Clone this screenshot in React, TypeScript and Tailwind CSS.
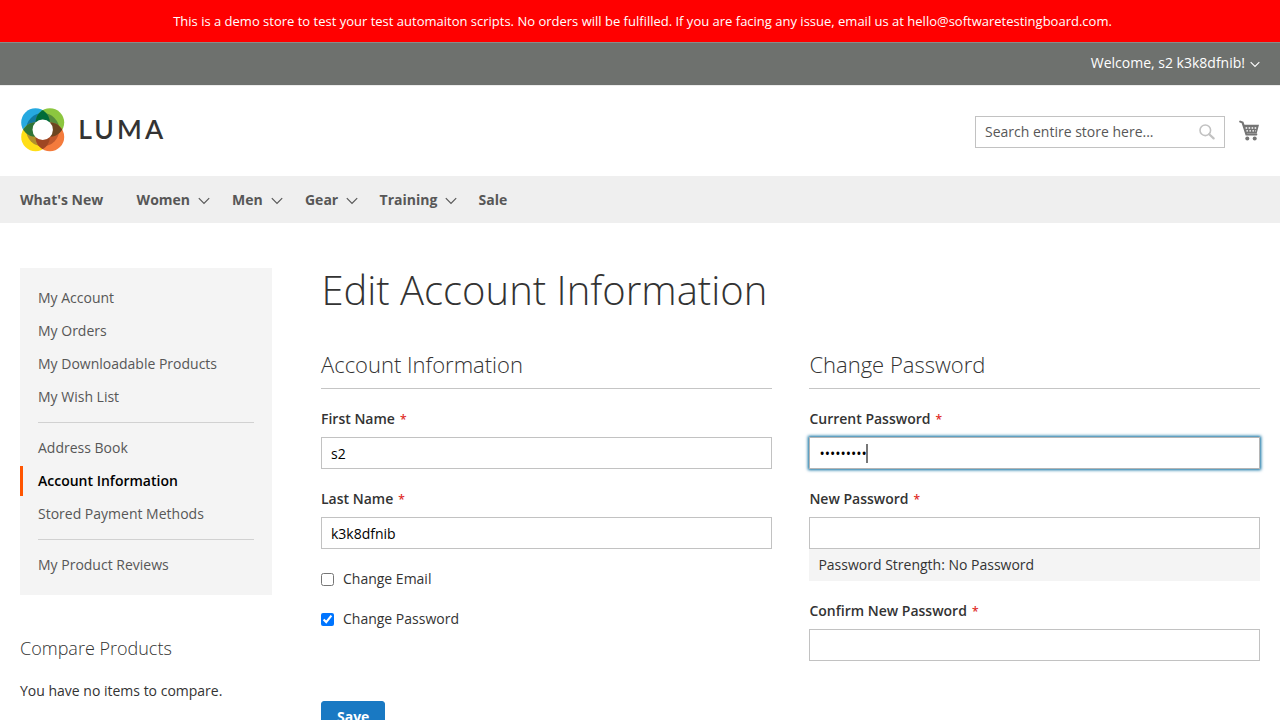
import type { ReactNode } from "react";

function Chevron({ className, strokeWidth = 1.2 }: { className: string; strokeWidth?: number }) {
  return (
    <svg viewBox="0 0 12 8" className={className} fill="none" stroke="currentColor" strokeWidth={strokeWidth}>
      <path d="M0.8 1.2 L6 6.4 L11.2 1.2" />
    </svg>
  );
}

function Logo() {
  return (
    <div className="flex items-center">
      <svg viewBox="0 0 44 44" className="h-11 w-11">
        <defs>
          <clipPath id="tl"><circle cx="14.5" cy="14.5" r="14.3" /></clipPath>
          <clipPath id="tr"><circle cx="28.9" cy="14.5" r="14.3" /></clipPath>
          <clipPath id="bl"><circle cx="14.5" cy="28.9" r="14.3" /></clipPath>
          <clipPath id="br"><circle cx="28.9" cy="28.9" r="14.3" /></clipPath>
        </defs>
        <circle cx="14.5" cy="14.5" r="14.3" fill="#26a9e0" />
        <circle cx="28.9" cy="14.5" r="14.3" fill="#8cc63f" />
        <circle cx="14.5" cy="28.9" r="14.3" fill="#ffde17" />
        <circle cx="28.9" cy="28.9" r="14.3" fill="#f47b3c" />
        <g clipPath="url(#tl)"><circle cx="21.7" cy="21.7" r="16.6" fill="#12799f" /></g>
        <g clipPath="url(#tr)"><circle cx="21.7" cy="21.7" r="16.6" fill="#568a3c" /></g>
        <g clipPath="url(#bl)"><circle cx="21.7" cy="21.7" r="16.6" fill="#b0902c" /></g>
        <g clipPath="url(#br)"><circle cx="21.7" cy="21.7" r="16.6" fill="#c0582b" /></g>
        <g clipPath="url(#tl)">
          <circle cx="28.9" cy="14.5" r="14.3" fill="#006b38" />
          <circle cx="14.5" cy="28.9" r="14.3" fill="#2f7436" />
        </g>
        <g clipPath="url(#br)">
          <circle cx="14.5" cy="28.9" r="14.3" fill="#9f4723" />
          <circle cx="28.9" cy="14.5" r="14.3" fill="#6b451f" />
        </g>
        <circle cx="21.7" cy="21.7" r="10.2" fill="#fff" />
      </svg>
      <span className="mb-0.5 ml-[13.5px] font-['Lato',sans-serif] text-[26.5px] leading-[44px] font-semibold tracking-[3.1px] text-[#333]">LUMA</span>
    </div>
  );
}

function NavItem({ label, menu }: { label: string; menu?: boolean }) {
  return (
    <a className="flex items-center whitespace-nowrap">
      {label}
      {menu && <Chevron className="ml-2 mt-0.5 h-2 w-3" />}
    </a>
  );
}

function SideLink({ children, current }: { children: ReactNode; current?: boolean }) {
  return (
    <a
      className={
        current
          ? "mb-[3px] block h-[30px] border-l-[3px] border-[#ff5501] pl-[15px] leading-[30px] font-semibold text-black"
          : "mb-[3px] block h-[30px] pl-[18px] leading-[30px] text-[#575757]"
      }
    >
      {children}
    </a>
  );
}

function Divider() {
  return <div className="mx-[18px] mt-[10px] mb-[10px] h-px bg-[#d1d1d1]" />;
}

function Label({ children }: { children: ReactNode }) {
  return (
    <div className="mb-2 h-5 leading-5 font-semibold">
      {children}
      <span className="ml-[5px] text-[12px] font-semibold text-[#e02b27]">*</span>
    </div>
  );
}

const inputClass = "block h-8 w-full border border-[#c2c2c2] bg-white px-[9px] text-sm text-black outline-none";

function Legend({ children }: { children: ReactNode }) {
  return (
    <h2 className="mb-5 h-[43px] border-b border-[#c5c5c5] text-[22px] leading-[37px] font-light">{children}</h2>
  );
}

export default function App() {
  return (
    <div className="h-[720px] w-[1280px] overflow-hidden bg-white font-['Open_Sans','Noto_Sans',sans-serif] text-sm text-[#333]">
      <div className="flex h-[42px] items-center justify-center bg-[#ff0000] pl-[5px] text-[13px] text-white">
        This is a demo store to test your test automaiton scripts. No orders will be fulfilled. If you are facing any issue, email us at hello@softwaretestingboard.com.
      </div>
      <div className="flex h-[43px] items-center justify-end border-t border-[#8a8c8a] bg-[#6e716e] pr-5 pb-0.5 text-white">
        Welcome, s2 k3k8dfnib!
        <Chevron className="mt-[3px] ml-[5px] h-[7px] w-2.5" strokeWidth={1.3} />
      </div>

      <header className="flex h-[91px] items-center justify-between border-t border-[#ededed] pr-5 pl-[20.7px]">
        <div className="pb-[3px]"><Logo /></div>
        <div className="flex items-center pt-px">
          <div className="flex h-8 w-[250px] items-center justify-between border border-[#c2c2c2] pr-[9px] pl-[9px] text-[#575757]">
            <span>Search entire store here...</span>
            <svg viewBox="0 0 16 16" className="h-4 w-4" fill="none" stroke="#c2c2c2">
              <circle cx="6.3" cy="6.3" r="5.3" strokeWidth="1.6" />
              <path d="M10.2 10.2 L14.6 14.4" strokeWidth="2.2" strokeLinecap="round" />
            </svg>
          </div>
          <svg viewBox="0 0 21 21" className="mb-[3px] ml-3.5 h-[21px] w-[21px]" fill="#757575">
            <path d="M1.2 1.6 L3.6 2.6 L7.4 14.4 H17.3" fill="none" stroke="#757575" strokeWidth="2.1" strokeLinecap="round" />
            <path d="M4 4.8 H20 L17.8 13 H6.6 Z" />
            <path d="M6.6 8 H18 M7.4 10.8 H17" stroke="#fff" strokeWidth="1.3" strokeDasharray="1.6 1.4" />
            <circle cx="8.3" cy="18.4" r="2" />
            <circle cx="15.7" cy="18.4" r="2" />
          </svg>
        </div>
      </header>

      <nav className="flex h-[47px] items-center bg-[#efefef] px-5 font-bold text-[#575757]">
        <div className="w-[116.6px]"><NavItem label="What's New" /></div>
        <div className="w-[95.4px]"><NavItem label="Women" menu /></div>
        <div className="w-[73px]"><NavItem label="Men" menu /></div>
        <div className="w-[74.6px]"><NavItem label="Gear" menu /></div>
        <div className="w-[99px]"><NavItem label="Training" menu /></div>
        <NavItem label="Sale" />
      </nav>

      <div className="flex px-5 pt-[45px]">
        <aside className="mr-[49.4px] w-[251.6px] shrink-0">
          <div className="h-[327px] bg-[#f4f4f4] pt-[15px]">
            <SideLink>My Account</SideLink>
            <SideLink>My Orders</SideLink>
            <SideLink>My Downloadable Products</SideLink>
            <SideLink>My Wish List</SideLink>
            <Divider />
            <SideLink>Address Book</SideLink>
            <SideLink current>Account Information</SideLink>
            <SideLink>Stored Payment Methods</SideLink>
            <Divider />
            <SideLink>My Product Reviews</SideLink>
          </div>
          <h3 className="mt-10 text-[18px] leading-[26px] font-light">Compare Products</h3>
          <p className="mt-5 leading-5">You have no items to compare.</p>
        </aside>

        <main className="w-[939px] shrink-0">
          <h1 className="mb-[34px] pl-[0.4px] text-[40px] leading-[44px] font-light">Edit Account Information</h1>
          <div className="flex justify-between">
            <section className="w-[451px]">
              <Legend>Account Information</Legend>
              <Label>First Name</Label>
              <input className={inputClass} defaultValue="s2" />
              <div className="mt-5"><Label>Last Name</Label></div>
              <input className={inputClass} defaultValue="k3k8dfnib" />
              <label className="mt-5 flex h-5 items-center">
                <input type="checkbox" className="mt-px mr-[9px] h-[13px] w-[13px]" />
                Change Email
              </label>
              <label className="mt-5 flex h-5 items-center">
                <input type="checkbox" defaultChecked className="mt-px mr-[9px] h-[13px] w-[13px]" />
                Change Password
              </label>
              <button className="mt-[72px] block h-8 rounded-[3px] border border-[#1979c3] bg-[#1979c3] px-[15px] leading-4 font-bold text-white">
                Save
              </button>
            </section>
            <section className="w-[450.6px]">
              <Legend>Change Password</Legend>
              <Label>Current Password</Label>
              <div className="flex h-8 items-center border border-[#b5b5b5] pl-[9px] text-black shadow-[0_0_3px_1px_#00699d]">
                <span className="pt-px">•••••••••</span>
                <span className="-ml-px h-[19px] w-0.5 bg-[#777]" />
              </div>
              <div className="mt-5"><Label>New Password</Label></div>
              <input className={inputClass} />
              <div className="h-8 bg-[#f4f4f4] pl-[9px] leading-8">Password Strength: No Password</div>
              <div className="mt-5"><Label>Confirm New Password</Label></div>
              <input className={inputClass} />
            </section>
          </div>
        </main>
      </div>
    </div>
  );
}
